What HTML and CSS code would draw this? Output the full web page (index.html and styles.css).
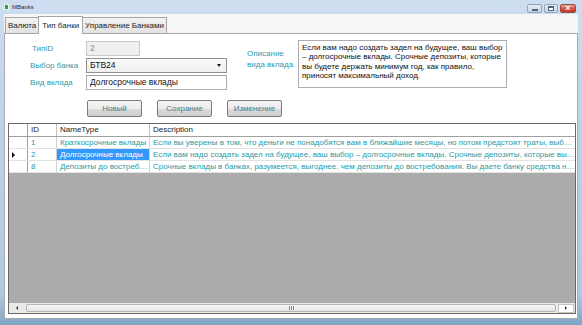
FILE: index.html
```html
<!DOCTYPE html>
<html lang="ru">
<head>
  <meta charset="UTF-8">
  <meta name="viewport" content="width=device-width, initial-scale=1.0">
  <title>MBanks</title>
  <link rel="stylesheet" href="styles.css">
</head>
<body>
  <div class="window">
    <div class="titlebar">
      <span class="app-icon"></span>
      <span class="title">MBanks</span>
      <div class="controls">
        <span class="ctl min"><i></i></span>
        <span class="ctl max"><i></i></span>
        <span class="ctl close">&#215;</span>
      </div>
    </div>

    <div class="client">
      <div class="tabs">
        <div class="tab">Валюта</div>
        <div class="tab active">Тип банки</div>
        <div class="tab">Управление Банками</div>
      </div>

      <div class="page">
        <div class="form">
          <div class="fields">
            <label class="lbl id-lbl">ТипID</label>
            <div class="box disabled short">2</div>
            <label class="lbl">Выбор банка</label>
            <div class="box combo">БТВ24<span class="drop"></span></div>
            <label class="lbl">Вид вклада</label>
            <div class="box">Долгосрочные вклады</div>
          </div>
          <div class="desc">
            <label class="lbl desc-lbl">Описание<br>вида вклада</label>
            <div class="memo">Если вам надо создать задел на будущее, ваш выбор – долгосрочные вклады. Срочные депозиты, которые вы будете держать минимум год, как правило, приносят максимальный доход.</div>
          </div>
        </div>

        <div class="buttons">
          <button class="btn">Новый</button>
          <button class="btn">Сохрание</button>
          <button class="btn">Изменение</button>
        </div>

        <div class="grid">
          <div class="grid-row head">
            <div class="cell rowhead"></div>
            <div class="cell">ID</div>
            <div class="cell">NameType</div>
            <div class="cell">Description</div>
          </div>
          <div class="grid-row">
            <div class="cell rowhead"></div>
            <div class="cell">1</div>
            <div class="cell">Краткосрочные вклады</div>
            <div class="cell">Если вы уверены в том, что деньги не понадобятся вам в ближайшие месяцы, но потом предстоят траты, выбирайте краткосрочные вклады.</div>
          </div>
          <div class="grid-row">
            <div class="cell rowhead"><span class="arrow"></span></div>
            <div class="cell">2</div>
            <div class="cell selected">Долгосрочные вклады</div>
            <div class="cell">Если вам надо создать задел на будущее, ваш выбор – долгосрочные вклады. Срочные депозиты, которые вы будете держать минимум год.</div>
          </div>
          <div class="grid-row">
            <div class="cell rowhead"></div>
            <div class="cell">8</div>
            <div class="cell">Депозиты до востребования</div>
            <div class="cell">Срочные вклады в банках, разумеется, выгоднее, чем депозиты до востребования. Вы даете банку средства на определенный срок.</div>
          </div>
          <div class="grid-empty"></div>
          <div class="hscroll">
            <span class="sb-arrow left"></span>
            <span class="sb-thumb"><i></i></span>
            <span class="sb-arrow right"></span>
          </div>
        </div>
      </div>
    </div>
  </div>
</body>
</html>
```

FILE: styles.css
```css
*{
  box-sizing: border-box;
}
body{
  margin: 0;
  font-family: "Liberation Sans", Arial, sans-serif;
  font-size: 8px;
  color: #1a1a1a;
}
.window{
  width: 582px;
  height: 325px;
  display: flex;
  flex-direction: column;
  padding: 0 4px 6px 4px;
  background: linear-gradient(#cddef1, #c0d4eb 30%, #b2c9e3 90%, #7fa6c6);
}

/* title bar */
.titlebar{
  height: 14px;
  display: flex;
  align-items: center;
}
.app-icon{
  width: 5px;
  height: 6px;
  background: #3c9a4a;
  border: 1px solid #e8f4e8;
}
.title{
  margin-left: 3px;
  font-size: 6px;
  color: #2a2a2a;
}
.controls{
  margin-left: auto;
  margin-right: 2px;
  display: flex;
  gap: 2px;
  align-self: flex-start;
  margin-top: 4px;
}
.ctl{
  height: 9px;
  width: 15px;
  border: 1px solid #8ea4bf;
  border-radius: 2px;
  background: linear-gradient(#e4ecf6, #c5d4e6);
  display: flex;
  align-items: center;
  justify-content: center;
}
.ctl.min i{
  width: 6px;
  height: 2px;
  margin-top: 3px;
  background: #fff;
  border: 1px solid #51647c;
}
.ctl.max{
  width: 14px;
}
.ctl.max i{
  width: 6px;
  height: 5px;
  border: 1px solid #51647c;
  border-top-width: 2px;
  background: #fff;
}
.ctl.close{
  width: 16px;
  border-color: #9a4a42;
  background: linear-gradient(#e8a396, #d4503d 55%, #c4392a);
  color: #fff;
  font-size: 9px;
  line-height: 9px;
  font-weight: bold;
}

/* tabs */
.client{
  flex: 1;
  display: flex;
  flex-direction: column;
  background: #f6f6f6;
}
.tabs{
  height: 19px;
  display: flex;
  align-items: flex-end;
  padding-left: 1px;
}
.tab{
  height: 16px;
  padding: 0 2px;
  border: 1px solid #a6a6a6;
  border-bottom: none;
  border-right: none;
  background: linear-gradient(#f3f3f3, #e2e2e2);
  font-size: 8px;
  line-height: 15px;
  color: #1e1e1e;
}
.tab:last-child{
  border-right: 1px solid #a6a6a6;
}
.tab.active{
  height: 18px;
  margin-bottom: -1px;
  padding: 0 3px;
  background: #fff;
  border-right: 1px solid #a6a6a6;
  line-height: 17px;
  position: relative;
}
.tab.active + .tab{
  border-left: none;
}
.page{
  flex: 1;
  background: #fff;
  border: 1px solid #a9a9a9;
  padding: 0 1px 4px 3px;
  display: flex;
  flex-direction: column;
}

/* form */
.form{
  display: flex;
  padding: 7px 0 0 22px;
}
.fields{
  display: grid;
  grid-template-columns: 56px 141px;
  grid-auto-rows: 15px;
  row-gap: 2px;
  align-items: center;
}
.lbl{
  color: #2f9ca8;
}
.id-lbl{
  padding-left: 2px;
}
.box{
  height: 15px;
  border: 1px solid #abadb3;
  border-top-color: #9aa0a8;
  padding: 0 3px;
  line-height: 13px;
  background: #fff;
  color: #111;
  font-size: 8.5px;
}
.box.short{
  width: 54px;
}
.box.disabled{
  background: #f0f0f0;
  color: #8c8c8c;
  border-color: #c8c8c8;
}
.box.combo{
  display: flex;
  align-items: center;
  border-color: #8e8f8f;
  background: linear-gradient(#fbfbfb, #eeeeee);
}
.drop{
  margin-left: auto;
  margin-right: 2px;
  border-left: 2px solid transparent;
  border-right: 2px solid transparent;
  border-top: 3px solid #111;
}
.desc{
  display: flex;
  margin-left: 20px;
  margin-top: -1px;
}
.desc-lbl{
  width: 51px;
  margin-top: 8px;
  line-height: 11px;
}
.memo{
  width: 209px;
  height: 48px;
  border: 1px solid #abadb3;
  padding: 2px 3px;
  line-height: 9.3px;
  color: #111;
}

/* buttons */
.buttons{
  display: flex;
  gap: 15px;
  margin-top: 10px;
  padding-left: 79px;
}
.btn{
  width: 55px;
  height: 17px;
  padding: 0;
  border: 1px solid #7a7a7a;
  border-radius: 2px;
  background: linear-gradient(#f4f4f4, #ececec 50%, #dcdcdc 51%, #cfcfcf);
  font-family: inherit;
  font-size: 8px;
  color: #437f8d;
}

/* data grid */
.grid{
  margin-top: 6px;
  flex: 1;
  display: flex;
  flex-direction: column;
  border: 1px solid #6a6a6a;
  background: #ababab;
}
.grid-row{
  display: grid;
  grid-template-columns: 19px 29px 93px 1fr;
  height: 12px;
  background: #fff;
  border-bottom: 1px solid #e2e2e2;
}
.grid-row.head{
  height: 13px;
  border-bottom: 1px solid #a0a0a0;
}
.cell{
  padding-left: 3px;
  line-height: 11px;
  white-space: nowrap;
  overflow: hidden;
  text-overflow: ellipsis;
  border-right: 1px solid #d0d0d0;
  color: #2a9aa6;
}
.head .cell{
  color: #1a1a1a;
  line-height: 12px;
  border-right-color: #c0c0c0;
}
.cell:last-child{
  border-right: none;
}
.cell.rowhead{
  border-right-color: #a0a0a0;
  display: flex;
  align-items: center;
}
.cell.selected{
  background: #3399ff;
  color: #fff;
}
.arrow{
  border-left: 3px solid #111;
  border-top: 3px solid transparent;
  border-bottom: 3px solid transparent;
}
.grid-empty{
  flex: 1;
}
.hscroll{
  height: 10px;
  display: flex;
  align-items: center;
  background: #eaeaea;
  padding: 0 1px;
}
.sb-arrow{
  width: 14px;
  height: 9px;
  display: flex;
  align-items: center;
  justify-content: center;
}
.sb-arrow.left::before{
  content: "";
  border-right: 2px solid #333;
  border-top: 2px solid transparent;
  border-bottom: 2px solid transparent;
}
.sb-arrow.right{
  width: 16px;
  background: #fff;
  border: 1px solid #c4c4c4;
}
.sb-arrow.right::before{
  content: "";
  border-left: 2px solid #333;
  border-top: 2px solid transparent;
  border-bottom: 2px solid transparent;
}
.sb-thumb{
  flex: 1;
  height: 8px;
  margin: 0 2px;
  border: 1px solid #b4b4b4;
  border-radius: 2px;
  background: linear-gradient(#f6f6f6, #e4e4e4);
  display: flex;
  justify-content: center;
  align-items: center;
}
.sb-thumb i{
  width: 5px;
  height: 4px;
  border-left: 1px solid #888;
  border-right: 1px solid #888;
  background: linear-gradient(90deg, transparent 40%, #888 40%, #888 60%, transparent 60%);
}
```
